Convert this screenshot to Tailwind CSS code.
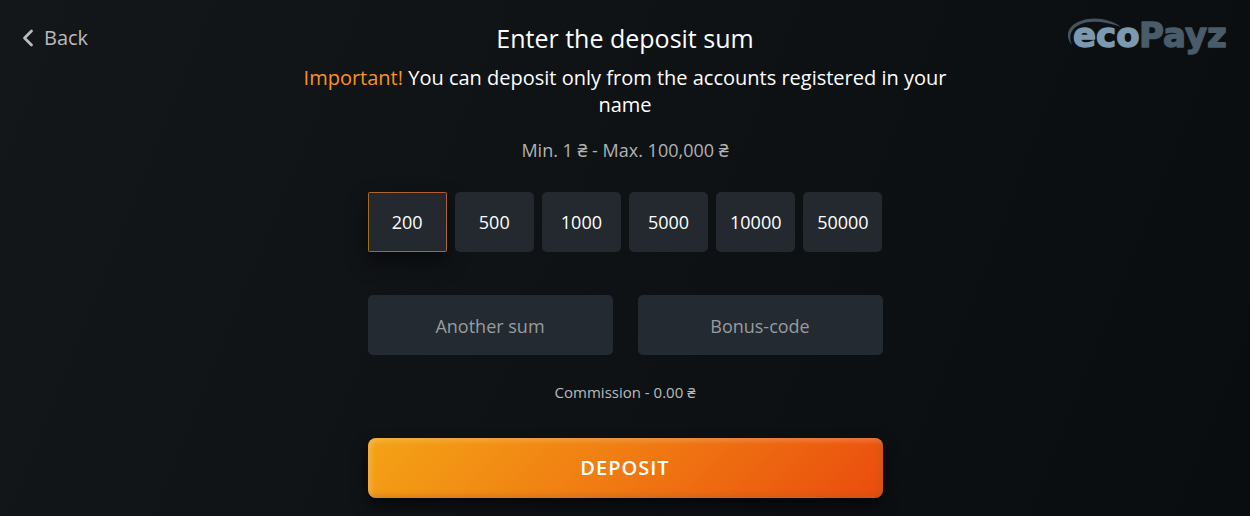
<!DOCTYPE html>
<html lang="en">
<head>
<meta charset="utf-8">
<meta name="viewport" content="width=device-width, initial-scale=1">
<title>Deposit</title>
<script src="https://cdn.jsdelivr.net/npm/@tailwindcss/browser@4"></script>
</head>
<body class="min-h-screen bg-linear-[112deg,#13171a,#0a0d10] font-['Open_Sans','Noto_Sans',sans-serif] text-white">
<div class="grid grid-cols-[1fr_minmax(0,675px)_1fr] items-start px-[22px] pt-4 pb-[18px]">
  <a href="#" class="mt-2 flex items-center gap-2.5 text-xl leading-7 text-[#b9bbbc]">
    <svg class="h-[18px] w-3" viewBox="0 0 12 18" fill="none" stroke="currentColor" stroke-width="2.8" stroke-linecap="round" stroke-linejoin="round" aria-hidden="true"><path d="M9.5 2 2.5 9l7 7"/></svg>
    Back
  </a>
  <main class="flex flex-col items-center text-center">
    <h1 class="mt-1 text-[25px] leading-9">Enter the deposit sum</h1>
    <p class="mt-2 text-xl leading-[27px]"><span class="text-[#f7931e]">Important!</span> You can deposit only from the accounts registered in your name</p>
    <p class="mt-5 text-lg leading-6 text-[#b0b2b3]">Min. 1 ₴ - Max. 100,000 ₴</p>
    <form class="mt-[30px] w-full max-w-[515px]">
      <div class="grid grid-cols-6 gap-2 text-lg">
        <button type="button" aria-pressed="true" class="h-[60px] rounded-xs bg-linear-to-tr from-[#9a7410] to-[#b85a38] p-px shadow-[0_10px_20px_rgba(0,0,0,0.5)]"><span class="flex h-full items-center justify-center bg-[#23292e]">200</span></button>
        <button type="button" class="h-[60px] rounded-[5px] bg-[#23292e]">500</button>
        <button type="button" class="h-[60px] rounded-[5px] bg-[#23292e]">1000</button>
        <button type="button" class="h-[60px] rounded-[5px] bg-[#23292e]">5000</button>
        <button type="button" class="h-[60px] rounded-[5px] bg-[#23292e]">10000</button>
        <button type="button" class="h-[60px] rounded-[5px] bg-[#23292e]">50000</button>
      </div>
      <div class="mt-[43px] grid grid-cols-2 gap-[25px] text-lg">
        <input type="text" aria-label="Another sum" placeholder="Another sum" class="h-[60px] w-full rounded-[5px] bg-[#232a31] px-3 pt-0.5 text-center placeholder:text-[#999c9e]">
        <input type="text" aria-label="Bonus-code" placeholder="Bonus-code" class="h-[60px] w-full rounded-[5px] bg-[#232a31] px-3 pt-0.5 text-center placeholder:text-[#999c9e]">
      </div>
      <p class="mt-[25px] text-[15px] leading-6 text-[#b9bbbc]">Commission - 0.00 ₴</p>
      <button type="submit" class="mt-[34px] h-[60px] w-full rounded-lg bg-linear-[135deg,#f4a316,#f07a12_50%,#ea4c0e] text-xl font-semibold tracking-[1px] shadow-[0_8px_16px_rgba(0,0,0,0.6),inset_3px_3px_5px_rgba(255,255,255,0.2),inset_-3px_-3px_5px_rgba(150,90,40,0.3)]">DEPOSIT</button>
    </form>
  </main>
  <svg class="h-12 w-[162px] justify-self-end" viewBox="0 0 162 48" role="img" aria-label="ecoPayz">
    <path fill="#455460" d="M6 29C-1 21 1 11 12 6c13-6 31-4 43 5C41 6 26 4 15 8 5 12 2 20 6 29Z"/>
    <g class="font-['DejaVu_Sans',sans-serif] font-bold" stroke-width="1.4" stroke-linejoin="round" font-size="34">
      <text x="7" y="31" fill="#7c99b0" stroke="#7c99b0">eco</text>
      <text x="73" y="31" fill="#4a5b69" stroke="#4a5b69">Payz</text>
    </g>
  </svg>
</div>
</body>
</html>
